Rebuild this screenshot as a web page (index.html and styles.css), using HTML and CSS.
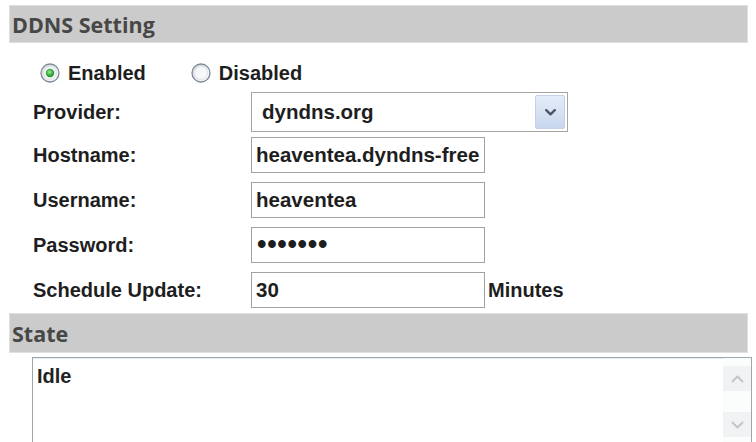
FILE: index.html
```html
<!DOCTYPE html>
<html>
<head>
<meta charset="utf-8">
<title>DDNS Setting</title>
<link rel="stylesheet" href="styles.css">
</head>
<body>
<div class="page">
  <div class="section-head head-ddns">DDNS Setting</div>

  <div class="radios">
    <div class="radio">
      <svg class="radio-icon" width="20" height="20" viewBox="0 0 20 20">
        <defs>
          <linearGradient id="rg1" x1="0" y1="0" x2="1" y2="1">
            <stop offset="0" stop-color="#cfd4d9"/>
            <stop offset="1" stop-color="#ffffff"/>
          </linearGradient>
          <radialGradient id="dot" cx="0.45" cy="0.4" r="0.6">
            <stop offset="0" stop-color="#a8eaa0"/>
            <stop offset="0.55" stop-color="#3fb445"/>
            <stop offset="1" stop-color="#1f8a2a"/>
          </radialGradient>
        </defs>
        <circle cx="10" cy="10" r="9" fill="url(#rg1)" stroke="#7d8996" stroke-width="1.3"/>
        <circle cx="10" cy="10" r="6.5" fill="#f4f6f7" stroke="#dfe3e6" stroke-width="1"/>
        <circle cx="10" cy="10" r="4.2" fill="url(#dot)"/>
      </svg>
      <span>Enabled</span>
    </div>
    <div class="radio radio-second">
      <svg class="radio-icon" width="20" height="20" viewBox="0 0 20 20">
        <defs>
          <linearGradient id="rg2" x1="0" y1="0" x2="1" y2="1">
            <stop offset="0" stop-color="#cfd4d9"/>
            <stop offset="1" stop-color="#ffffff"/>
          </linearGradient>
        </defs>
        <circle cx="10" cy="10" r="9" fill="url(#rg2)" stroke="#7d8996" stroke-width="1.3"/>
        <circle cx="10" cy="10" r="6.5" fill="#f7f8f9" stroke="#e3e6e9" stroke-width="1"/>
      </svg>
      <span>Disabled</span>
    </div>
  </div>

  <div class="form">
    <div class="row row-select">
      <span class="label">Provider:</span>
      <div class="select">
        <span>dyndns.org</span>
        <span class="select-arrow">
          <svg width="11" height="7" viewBox="0 0 11 7"><polyline points="1.2,1.2 5.5,5.3 9.8,1.2" fill="none" stroke="#4b5668" stroke-width="2.4" stroke-linecap="round" stroke-linejoin="round"/></svg>
        </span>
      </div>
    </div>
    <div class="row">
      <span class="label">Hostname:</span>
      <div class="field">heaventea.dyndns-free</div>
    </div>
    <div class="row">
      <span class="label">Username:</span>
      <div class="field">heaventea</div>
    </div>
    <div class="row">
      <span class="label">Password:</span>
      <div class="field field-password">&#8226;&#8226;&#8226;&#8226;&#8226;&#8226;&#8226;</div>
    </div>
    <div class="row row-last">
      <span class="label">Schedule Update:</span>
      <div class="field">30</div>
      <span class="unit">Minutes</span>
    </div>
  </div>

  <div class="section-head head-state">State</div>

  <div class="state-box">
    <div class="state-text">Idle</div>
    <div class="scrollbar">
      <div class="scroll-btn">
        <svg width="13" height="8" viewBox="0 0 13 8"><polyline points="1.5,6.5 6.5,1.5 11.5,6.5" fill="none" stroke="#c3c6c9" stroke-width="2" stroke-linecap="round" stroke-linejoin="round"/></svg>
      </div>
      <div class="scroll-btn">
        <svg width="13" height="8" viewBox="0 0 13 8"><polyline points="1.5,1.5 6.5,6.5 11.5,1.5" fill="none" stroke="#c3c6c9" stroke-width="2" stroke-linecap="round" stroke-linejoin="round"/></svg>
      </div>
    </div>
  </div>
</div>
</body>
</html>
```

FILE: styles.css
```css
* {
  box-sizing: border-box;
}

html,
body {
  margin: 0;
  padding: 0;
  background: #ffffff;
}

body {
  width: 756px;
  height: 442px;
  overflow: hidden;
  font-family: "Liberation Sans", Arial, sans-serif;
  font-weight: bold;
  font-size: 20px;
  color: #1e1e1e;
}

.page {
  padding-top: 5px;
}

.section-head {
  margin-left: 9px;
  width: 739px;
  background: #cbcbcb;
  border: 1px solid #e0e0e0;
  display: flex;
  align-items: center;
  padding-left: 2px;
  font-family: "Open Sans", "Liberation Sans", sans-serif;
  font-weight: 700;
  font-size: 21.5px;
  color: #474747;
}

.head-ddns {
  height: 38px;
}

.head-state {
  height: 40px;
}

.radios {
  display: flex;
  align-items: center;
  height: 20px;
  margin: 20px 0 9px 40px;
}

.radio {
  display: flex;
  align-items: center;
  gap: 8px;
  line-height: 20px;
}

.radio-icon {
  display: block;
  flex: none;
}

.radio-second {
  margin-left: 45px;
}

.form {
  display: flex;
  flex-direction: column;
}

.row {
  display: flex;
  align-items: flex-start;
  height: 45px;
}

.row-last {
  height: 41px;
}

.label {
  width: 251px;
  padding-left: 33px;
  line-height: 36px;
  white-space: nowrap;
}

.row-select .label {
  line-height: 40px;
}

.field {
  width: 234px;
  height: 36px;
  border: 1px solid #a2a2a2;
  padding-left: 4px;
  line-height: 34px;
  font-size: 20.5px;
  white-space: nowrap;
  overflow: hidden;
  background: #ffffff;
}

.field-password {
  font-size: 27px;
  letter-spacing: 0.7px;
  line-height: 33px;
  padding-left: 5px;
}

.unit {
  line-height: 36px;
  margin-left: 3px;
}

.select {
  width: 317px;
  height: 40px;
  border: 1px solid #a6a6a6;
  display: flex;
  align-items: center;
  justify-content: space-between;
  padding: 0 2px 0 10px;
  font-size: 20.5px;
  background: #ffffff;
}

.select-arrow {
  width: 30px;
  height: 34px;
  display: flex;
  align-items: center;
  justify-content: center;
  background: linear-gradient(#e4ecf8, #c9d7ee);
  border: 1px solid #c3d0e4;
  border-radius: 2px;
}

.state-box {
  margin: 4px 0 0 32px;
  width: 720px;
  height: 86px;
  border: 1px solid #9ea6ae;
  box-shadow: inset 0 1px 0 #e2edf8;
  display: flex;
  background: #ffffff;
}

.state-text {
  flex: 1;
  padding: 6px 4px;
  line-height: 24px;
  color: #222222;
}

.scrollbar {
  width: 28px;
  display: flex;
  flex-direction: column;
  justify-content: space-between;
  padding: 8px 0 5px;
  background: #fbfcfc;
}

.scroll-btn {
  height: 25px;
  display: flex;
  align-items: center;
  justify-content: center;
  background: #f1f2f3;
}
```
